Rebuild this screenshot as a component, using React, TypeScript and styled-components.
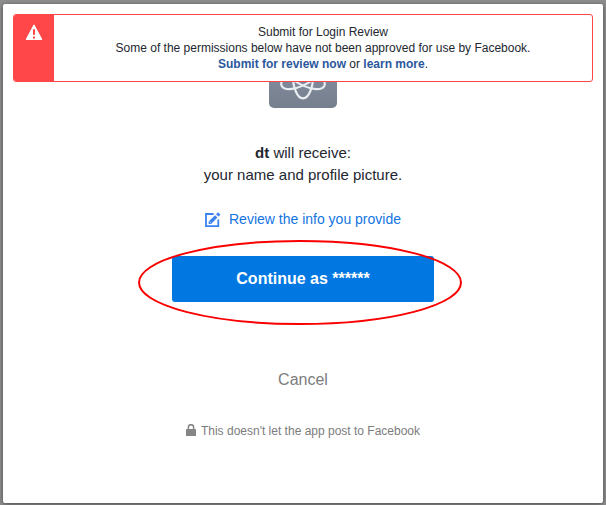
import React from 'react';
import styled, { createGlobalStyle } from 'styled-components';

const GlobalStyle = createGlobalStyle`
  * { box-sizing: border-box; }
  html, body { margin: 0; padding: 0; }
  body {
    background: #8f8f8f;
    font-family: "Liberation Sans", Arial, Helvetica, sans-serif;
    color: #23272f;
    overflow: hidden;
  }
`;

const Backdrop = styled.div`
  height: 505px;
  padding: 4px 3px 2px;
`;

const Dialog = styled.main`
  position: relative;
  height: 499px;
  padding-top: 36px;
  display: flex;
  flex-direction: column;
  align-items: center;
  background: #fff;
  border-radius: 2px;
  box-shadow: 0 1px 5px rgba(0, 0, 0, 0.5);
`;

const Banner = styled.aside`
  position: absolute;
  top: 10px;
  left: 10px;
  right: 10px;
  height: 68px;
  display: flex;
  background: #fff;
  border: 1px solid #ff4648;
  border-radius: 3px;
  overflow: hidden;
`;

const BannerMark = styled.div`
  width: 40px;
  padding-top: 9px;
  display: flex;
  justify-content: center;
  background: #ff4648;
  svg { display: block; }
`;

const BannerText = styled.div`
  flex: 1;
  padding-top: 9px;
  font-size: 12px;
  line-height: 16px;
  text-align: center;
`;

const BannerLink = styled.a`
  color: #2b589c;
  font-weight: bold;
`;

const AppTile = styled.div`
  width: 68px;
  height: 68px;
  border-radius: 5px;
  background: linear-gradient(#8d97a8, #757f8e);
  overflow: hidden;
  svg { display: block; }
`;

const Permissions = styled.p`
  margin: 34px 0 0;
  font-size: 15px;
  line-height: 22px;
  text-align: center;
`;

const ReviewLink = styled.a`
  margin-top: 23px;
  height: 20px;
  display: flex;
  align-items: center;
  gap: 7px;
  color: #1275df;
  font-size: 14px;
  line-height: 20px;
  svg { display: block; margin-top: 1px; }
`;

const ConfirmArea = styled.div`
  position: relative;
  margin-top: 27px;
`;

const ConfirmButton = styled.button`
  display: block;
  width: 262px;
  height: 46px;
  padding: 0;
  border: 0;
  border-radius: 3px;
  background: #0077e1;
  color: #fff;
  font: bold 16px/46px "Liberation Sans", Arial, sans-serif;
`;

const Highlight = styled.svg`
  position: absolute;
  left: -34px;
  top: -16px;
  pointer-events: none;
`;

const CancelLink = styled.a`
  margin-top: 67px;
  color: #7c7c7c;
  font-size: 16px;
  line-height: 22px;
`;

const Footnote = styled.div`
  margin-top: 32px;
  display: flex;
  align-items: center;
  gap: 5px;
  color: #7c7c7c;
  font-size: 12px;
  line-height: 16px;
  svg { display: block; margin-bottom: 2px; }
`;

const WarningIcon = () => (
  <svg width="18" height="17" viewBox="0 0 18 17">
    <path d="M9 1.3 16.5 15.3h-15Z" fill="#fff" stroke="#fff" strokeWidth="1.4" strokeLinejoin="round" />
    <path d="M8 5.2h2v5.6H8zM8 12.4h2v2.1H8z" fill="#ff4648" />
  </svg>
);

const AtomIcon = () => (
  <svg width="68" height="68" viewBox="0 0 68 68">
    <g fill="none" stroke="#e9ecf0" strokeWidth="2.2">
      {[0, 60, 120].map((angle) => (
        <ellipse key={angle} cx="34" cy="34" rx="10.3" ry="24.4" transform={`rotate(${angle} 34 34)`} />
      ))}
    </g>
    <circle cx="34" cy="34" r="4" fill="#e9ecf0" />
  </svg>
);

const EditIcon = () => (
  <svg width="17" height="17" viewBox="0 0 17 17">
    <g transform="translate(-0.9 0.9)">
      <path d="M9.5 2.1H1.9v12.1h12.3V7.5" fill="none" stroke="#3b82ee" strokeWidth="1.8" />
      <path d="M4.6 12V9.6l6.3-6.3 2.4 2.4L7 12Z" fill="#3b82ee" />
      <path d="m12 2.3 1.9-1.9 2.4 2.4-1.9 1.9Z" fill="#3b82ee" />
      <path d="m5.5 9.7 1.5 1.5" stroke="#fff" strokeWidth=".6" />
    </g>
  </svg>
);

const LockIcon = () => (
  <svg width="10" height="12" viewBox="0 0 10 12">
    <path d="M2.4 5.5V3.3a2.6 2.6 0 0 1 5.2 0v2.2" fill="none" stroke="#858585" strokeWidth="1.5" />
    <rect y="5" width="10" height="7" rx=".5" fill="#858585" />
  </svg>
);

export default function App() {
  return (
    <Backdrop>
      <GlobalStyle />
      <Dialog>
        <AppTile><AtomIcon /></AppTile>
        <Permissions>
          <b>dt</b> will receive:<br />
          your name and profile picture.
        </Permissions>
        <ReviewLink><EditIcon />Review the info you provide</ReviewLink>
        <ConfirmArea>
          <ConfirmButton>Continue as ******</ConfirmButton>
          <Highlight width="330" height="86" viewBox="0 0 330 86">
            <ellipse cx="162" cy="42.5" rx="161" ry="41.5" fill="none" stroke="#fa0000" strokeWidth="2" />
          </Highlight>
        </ConfirmArea>
        <CancelLink>Cancel</CancelLink>
        <Footnote><LockIcon />This doesn't let the app post to Facebook</Footnote>
        <Banner>
          <BannerMark><WarningIcon /></BannerMark>
          <BannerText>
            Submit for Login Review<br />
            Some of the permissions below have not been approved for use by Facebook.<br />
            <BannerLink>Submit for review now</BannerLink> or <BannerLink>learn more</BannerLink>.
          </BannerText>
        </Banner>
      </Dialog>
    </Backdrop>
  );
}
